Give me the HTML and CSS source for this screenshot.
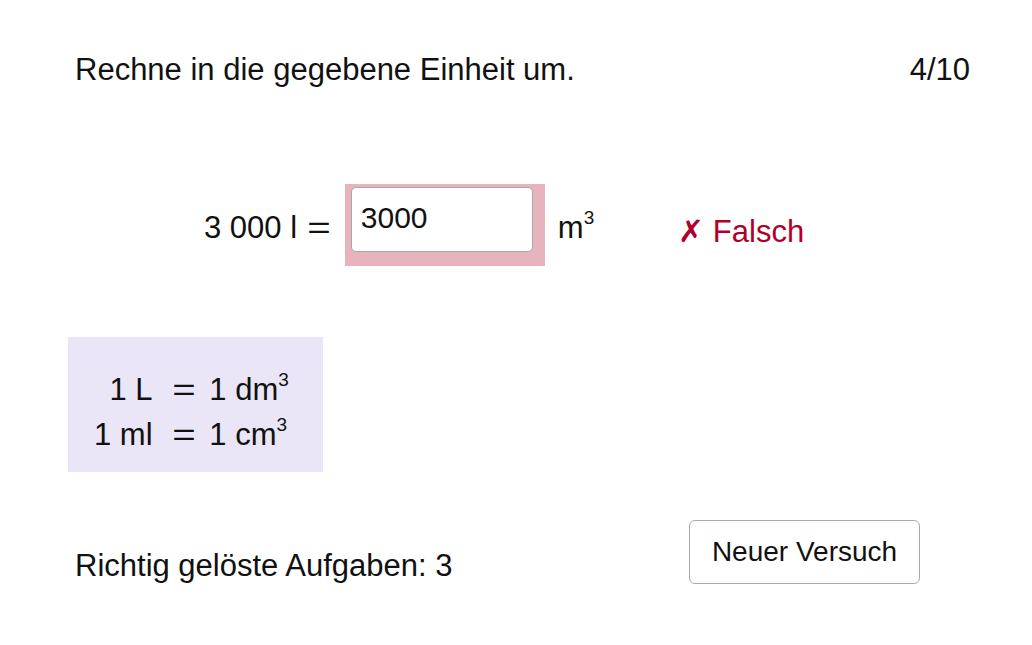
FILE: index.html
```html
<!DOCTYPE html>
<html lang="de">
<head>
    <meta charset="UTF-8">
    <title>Einheiten umrechnen</title>
    <link rel="stylesheet" href="styles.css">
</head>
<body>
    <div class="page">
        <div class="header">
            <span class="task-title">Rechne in die gegebene Einheit um.</span>
            <span class="counter">4/10</span>
        </div>

        <div class="task">
            <span class="given">3 000 l <span class="eq">=</span></span>
            <div class="answer-box wrong">
                <input class="answer" type="text" value="3000">
            </div>
            <span class="unit">m<sup>3</sup></span>
            <span class="feedback">✗ Falsch</span>
        </div>

        <div class="hint">
            <span class="lhs">1 L</span><span class="rhs"><span class="eq">=</span> 1 dm<sup>3</sup></span>
            <span class="lhs">1 ml</span><span class="rhs"><span class="eq">=</span> 1 cm<sup>3</sup></span>
        </div>

        <div class="footer">
            <span class="score">Richtig gelöste Aufgaben: 3</span>
            <button class="retry-btn">Neuer Versuch</button>
        </div>
    </div>
</body>
</html>
```

FILE: styles.css
```css
* {
    box-sizing: border-box;
    margin: 0;
    padding: 0;
}

body {
    background: #fff;
    color: #111;
    font-family: "Liberation Sans", Arial, sans-serif;
    font-size: 31px;
}

.page {
    width: 1032px;
    height: 645px;
    padding: 50px 62px 0 75px;
}

.header {
    display: flex;
    justify-content: space-between;
    align-items: center;
    height: 40px;
}

.eq {
    display: inline-block;
    transform: scaleX(1.3);
    margin: 0 4px;
}

.task {
    display: flex;
    align-items: center;
    margin-top: 94px;
    margin-left: 129px;
    height: 82px;
}

.given {
    margin-right: 13px;
    margin-top: 6px;
}

.answer-box {
    width: 200px;
    height: 82px;
    padding: 3px 12px 14px 6px;
}

.answer-box.wrong {
    background: #e7b4bd;
}

.answer {
    width: 182px;
    height: 65px;
    border: 1px solid #a9a9a9;
    border-radius: 5px;
    background: #fff;
    font-family: "Liberation Sans", Arial, sans-serif;
    font-size: 30px;
    color: #111;
    padding: 0 0 4px 9px;
    outline: none;
}

.unit {
    margin-left: 13px;
    margin-top: 6px;
}

sup {
    font-size: 19px;
    vertical-align: 14px;
    line-height: 0;
}

.feedback {
    margin-left: 84px;
    margin-top: 12px;
    color: #b0002a;
}

.hint {
    display: grid;
    grid-template-columns: auto auto;
    column-gap: 18px;
    row-gap: 8px;
    justify-content: start;
    align-content: center;
    width: 255px;
    height: 135px;
    margin-top: 71px;
    margin-left: -7px;
    padding: 14px 0 0 26px;
    background: #eae6f7;
    line-height: 37px;
}

.hint .eq {
    margin: 0 8px 0 4px;
}

.hint .lhs {
    text-align: right;
}

.footer {
    display: flex;
    justify-content: space-between;
    align-items: flex-start;
    margin-top: 48px;
    padding-right: 50px;
}

.score {
    margin-top: 28px;
}

.retry-btn {
    width: 231px;
    height: 64px;
    background: #fff;
    border: 1px solid #aaa;
    border-radius: 6px;
    font-family: "Liberation Sans", Arial, sans-serif;
    font-size: 28px;
    color: #111;
    cursor: pointer;
}
```
